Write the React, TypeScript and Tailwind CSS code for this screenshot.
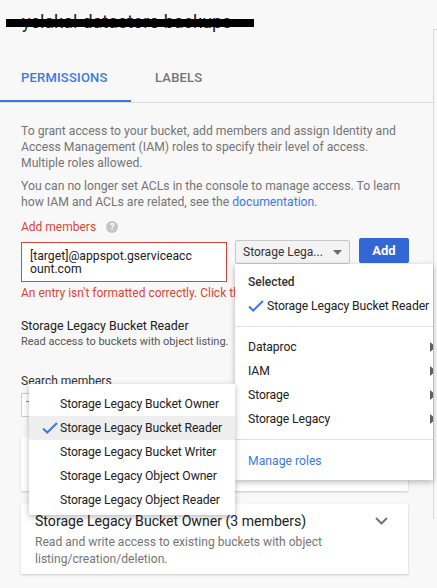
import React from "react";

const Check = () => (
  <svg width="16" height="12" viewBox="0 0 16 12" className="shrink-0">
    <path d="M1 6.5 L5.2 10.5 L15 1" fill="none" stroke="#3b78e7" strokeWidth="2" />
  </svg>
);

const Caret = () => (
  <svg width="6" height="10" viewBox="0 0 6 10" className="absolute left-[195px] top-[7px]">
    <path d="M0 0 L6 5 L0 10 Z" fill="#5f5f5f" />
  </svg>
);

export default function App() {
  const cats = ["Dataproc", "IAM", "Storage", "Storage Legacy"];
  const sub = [
    "Storage Legacy Bucket Owner",
    "Storage Legacy Bucket Reader",
    "Storage Legacy Bucket Writer",
    "Storage Legacy Object Owner",
    "Storage Legacy Object Reader",
  ];
  return (
    <div className="relative w-[437px] h-[588px] overflow-hidden bg-[#f8f8f8] font-['Roboto',sans-serif] text-[#212121]">
      {/* header */}
      <div className="relative h-[54px]">
        <div className="pl-[22px] pt-[11px] text-[18px] leading-[22px] text-[#212121]">yelakal-datastore-backups</div>
        <div className="absolute left-[6px] top-[19px] w-[248px] h-[8px] bg-black" />
      </div>

      {/* tabs */}
      <div className="flex h-[49px] border-b border-[#dcdcdc] mr-[4px]">
        <div className="relative w-[131px] pl-[21px] pt-[16px] text-[13px] leading-[16px] font-medium text-[#3b78e7] tracking-[0.2px]">
          PERMISSIONS
          <div className="absolute left-0 right-0 bottom-0 h-[2px] bg-[#3b78e7]" />
        </div>
        <div className="pl-[24px] pt-[16px] text-[13px] leading-[16px] font-medium text-[#757575] tracking-[0.2px]">LABELS</div>
      </div>

      {/* content */}
      <div className="pl-[21px] pt-[20px] w-[409px]">
        <p className="text-[12.2px] leading-[16px] text-[#757575] w-[385px]">
          To grant access to your bucket, add members and assign Identity and Access Management (IAM) roles to specify their level of access. Multiple roles allowed.
        </p>
        <p className="mt-[7px] text-[12.2px] leading-[16px] text-[#757575] w-[390px]">
          You can no longer set ACLs in the console to manage access. To learn how IAM and ACLs are related, see the <span className="text-[#3b78e7]">documentation</span>.
        </p>
        <div className="mt-[9px] flex items-center h-[16px] text-[12px] text-[#db4437]">
          Add members
          <span className="ml-[10px] w-[12px] h-[12px] rounded-full bg-[#c4c4c4] text-white text-[9px] font-bold leading-[12px] text-center">?</span>
        </div>
        <div className="mt-[3px] flex items-start">
          <div className="mt-[4px] w-[206px] h-[40px] border border-[#db4437] bg-white pl-[8px] pt-[7px] text-[12.2px] leading-[13px] text-[#212121] whitespace-nowrap">
            [target]@appspot.gserviceacc<br />ount.com
          </div>
          <div className="ml-[8px] mt-[2px] w-[115px] h-[24px] border border-[#c8c8c8] rounded-[2px] bg-[#f3f3f3] flex items-center pl-[7px] text-[12px] text-[#333] whitespace-nowrap">
            <span className="w-[90px]">Storage Lega...</span>
            <svg width="9" height="5" viewBox="0 0 9 5">
              <path d="M0 0 L9 0 L4.5 5 Z" fill="#6b6b6b" />
            </svg>
          </div>
          <div className="ml-[9px] w-[50px] h-[25px] rounded-[2px] bg-[#3367d6] text-white text-[13px] font-bold flex items-center justify-center">Add</div>
        </div>
        <div className="mt-[3px] text-[12px] leading-[16px] text-[#db4437] whitespace-nowrap">
          An entry isn't formatted correctly. Click the link to fix it.
        </div>
        <div className="mt-[17px] text-[12.4px] leading-[16px] text-[#212121]">Storage Legacy Bucket Reader</div>
        <div className="text-[11px] leading-[16px] text-[#555]">Read access to buckets with object listing.</div>
        <div className="mt-[23px] text-[12px] leading-[16px] text-[#333]">Search members</div>
        <div className="relative mt-[4px] w-[206px] h-[24px] border border-[#d0d0d0] bg-white">
          <div className="absolute left-[4px] top-[7px] w-[3px] h-[1px] bg-[#888]" />
        </div>
        <div className="mt-[20px] w-[387px] h-[54px] bg-white shadow-[0_1px_2px_rgba(0,0,0,0.2)] px-[14px] pt-[10px]">
          <div className="flex justify-between text-[14px] leading-[18px]">Storage Legacy Bucket Reader (1 member)</div>
        </div>
        <div className="mt-[13px] w-[387px] h-[70px] bg-white shadow-[0_1px_2px_rgba(0,0,0,0.2)] px-[14px] pt-[8px]">
          <div className="flex justify-between items-center">
            <div className="text-[14.1px] leading-[18px] text-[#212121]">Storage Legacy Bucket Owner (3 members)</div>
            <svg width="13" height="8" viewBox="0 0 13 8" className="mr-[6px]">
              <path d="M1 1 L6.5 6.5 L12 1" fill="none" stroke="#777" strokeWidth="2" />
            </svg>
          </div>
          <p className="mt-[4px] text-[12.1px] leading-[17px] text-[#757575] w-[330px]">
            Read and write access to existing buckets with object listing/creation/deletion.
          </p>
        </div>
      </div>

      {/* scrollbar edge */}
      <div className="absolute left-[433px] top-[29px] w-[4px] h-[490px] border-l border-t border-[#d8d8d8]" />

      {/* role menu */}
      <div className="absolute left-[235px] top-[264px] w-[198px] h-[216px] bg-white overflow-hidden shadow-[0_2px_6px_rgba(0,0,0,0.28)]">
        <div className="pt-[6px] pb-[8px] border-b border-[#e0e0e0]">
          <div className="h-[24px] flex items-center pl-[13px] text-[12px] font-medium text-[#333]">Selected</div>
          <div className="h-[24px] flex items-center pl-[13px] gap-[3px] text-[12.2px] tracking-[-0.1px] whitespace-nowrap text-[#212121]">
            <Check />
            Storage Legacy Bucket Reader
          </div>
        </div>
        <div className="pt-[8px] pb-[8px] border-b border-[#e0e0e0]">
          {cats.map((c) => (
            <div key={c} className="relative h-[24px] flex items-center pl-[13px] text-[12.2px] tracking-[-0.1px] text-[#212121]">
              {c}
              <Caret />
            </div>
          ))}
        </div>
        <div className="pt-[9px] h-[24px] flex items-center pl-[13px] text-[12.2px] text-[#3b78e7] box-content">Manage roles</div>
      </div>

      {/* sub menu */}
      <div className="absolute left-[29px] top-[384px] w-[206px] h-[131px] bg-white pt-[8px] shadow-[0_2px_6px_rgba(0,0,0,0.28)]">
        {sub.map((s, i) => (
          <div key={s} className={`h-[24px] flex items-center pl-[13px] text-[12.2px] tracking-[-0.1px] text-[#212121] whitespace-nowrap ${i === 1 ? "bg-[#eeeeee]" : ""}`}>
            <div className="w-[16px] mr-[2px] flex items-center">{i === 1 ? <Check /> : null}</div>
            {s}
          </div>
        ))}
      </div>
    </div>
  );
}
